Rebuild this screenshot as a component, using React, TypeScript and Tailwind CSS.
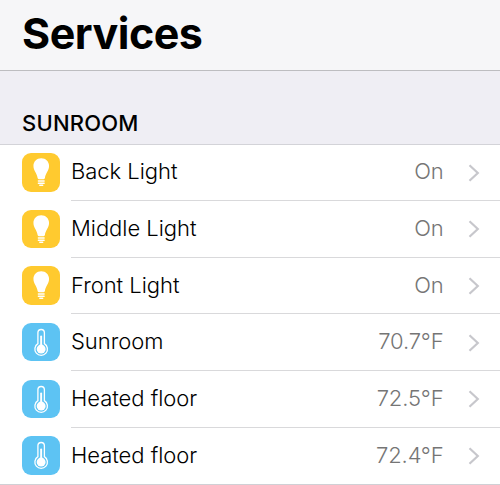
type Kind = "light" | "temperature";

interface Service {
  name: string;
  value: string;
  kind: Kind;
}

const services: Service[] = [
  { name: "Back Light", value: "On", kind: "light" },
  { name: "Middle Light", value: "On", kind: "light" },
  { name: "Front Light", value: "On", kind: "light" },
  { name: "Sunroom", value: "70.7°F", kind: "temperature" },
  { name: "Heated floor", value: "72.5°F", kind: "temperature" },
  { name: "Heated floor", value: "72.4°F", kind: "temperature" },
];

function BulbIcon() {
  return (
    <svg viewBox="0 0 38 38" className="size-full">
      <path
        d="M19 5.2c-4.5 0-7.7 3.3-7.7 7.6 0 4.7 3.7 7.4 4.1 11.9.1.7.5 1.1 1.2 1.1h4.8c.7 0 1.1-.4 1.2-1.1.4-4.5 4.1-7.2 4.1-11.9 0-4.3-3.2-7.6-7.7-7.6z"
        fill="#fff"
      />
      <path
        d="M16.2 27.6h5.6M16.2 29.8h5.6M17.6 31.9h2.8"
        stroke="#fff"
        strokeWidth="1.5"
        strokeLinecap="round"
      />
    </svg>
  );
}

function ThermometerIcon() {
  return (
    <svg viewBox="0 0 38 38" className="size-full">
      <path
        d="M15.7 20.4V9.6a3.2 3.2 0 0 1 6.4 0v10.8a6.2 6.2 0 1 1-6.4 0z"
        fill="none"
        stroke="#fff"
        strokeWidth="1.3"
      />
      <circle cx="18.9" cy="25.7" r="4.4" fill="#fff" />
      <path d="M18.9 24V13.4" stroke="#fff" strokeWidth="1.9" strokeLinecap="round" />
    </svg>
  );
}

function ServiceRow({ service, last }: { service: Service; last: boolean }) {
  const light = service.kind === "light";
  return (
    <li className="flex h-[56.67px] pl-[21.5px]">
      <div
        className={`mt-[8.5px] size-[38.5px] shrink-0 overflow-hidden rounded-[9px] ${
          light ? "bg-[#ffca2f]" : "bg-[#5dc3f3]"
        }`}
      >
        {light ? <BulbIcon /> : <ThermometerIcon />}
      </div>
      <div
        className={`ml-[11px] flex flex-1 items-center border-b pr-[20px] pb-[2px] ${
          last ? "border-transparent" : "border-[#d9d9db]"
        }`}
      >
        <span className="flex-1 text-[22px] font-[360] tracking-[-0.03px] text-black">
          {service.name}
        </span>
        <span className="text-[22px] font-[350] tracking-[-0.15px] text-[#757575]">
          {service.value}
        </span>
        <svg viewBox="0 0 12 18" className="mt-[3px] ml-[24.5px] h-[18px] w-[12px]">
          <path d="M1.5 1.3 9.8 9l-8.3 7.7" fill="none" stroke="#c7c7cc" strokeWidth="2.2" />
        </svg>
      </div>
    </li>
  );
}

export default function App() {
  return (
    <main className="flex h-[485px] w-[500px] flex-col overflow-hidden bg-white font-['Inter',sans-serif] leading-none">
      <header className="h-[71px] shrink-0 border-b border-[#bdbdc0] bg-[#f6f6f8] pt-[12px] pl-[22px]">
        <h1 className="text-[43px] font-bold tracking-[-0.5px] text-black">Services</h1>
      </header>
      <section>
        <h2 className="h-[73.5px] border-b border-[#d3d3d8] bg-[#efeef4] pt-[41px] pl-[22px] text-[22px] font-[480] tracking-[0.2px] text-black">
          SUNROOM
        </h2>
        <ul className="h-[340px] border-b border-[#d0d0d5]">
          {services.map((service, i) => (
            <ServiceRow key={i} service={service} last={i === services.length - 1} />
          ))}
        </ul>
      </section>
    </main>
  );
}
